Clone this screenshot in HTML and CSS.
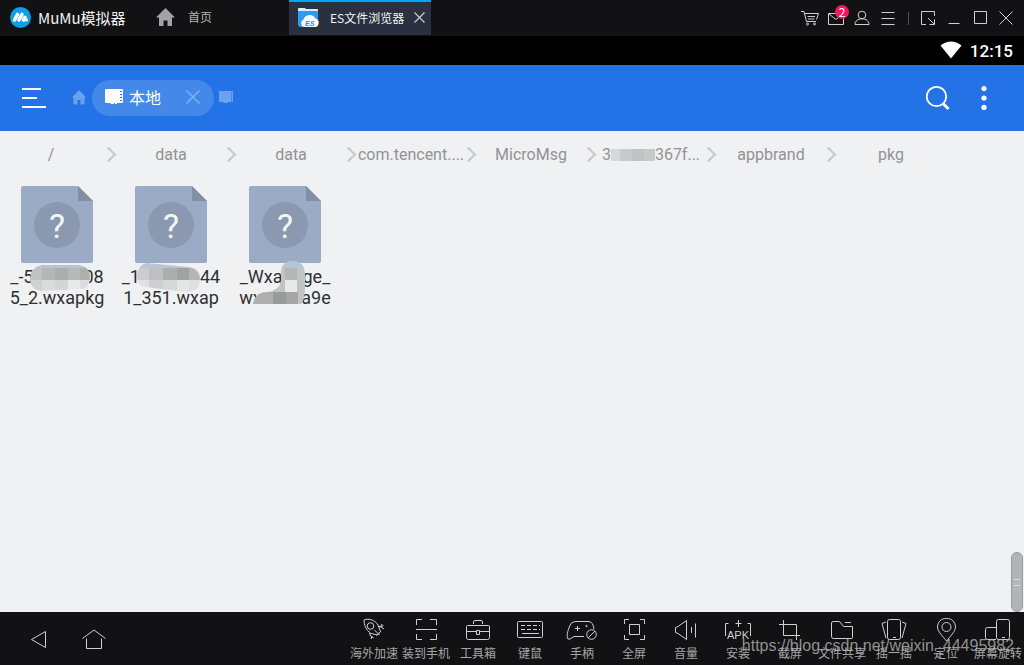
FILE: index.html
```html
<!DOCTYPE html>
<html lang="zh-CN">
<head>
<meta charset="utf-8">
<meta name="viewport" content="width=device-width, initial-scale=1">
<title>MuMu模拟器</title>
<link rel="stylesheet" href="styles.css">
</head>
<body>
<header class="titlebar">
  <div class="brand">
    <svg width="21" height="21" viewBox="0 0 21 21"><circle cx="10.500" cy="10.500" r="10.500" fill="#0a9fe8"/><path d="M4.500 13 7.500 7.500M9 13 12 7.500M13.500 13 15 10.500" stroke="#fff" stroke-width="3.600" stroke-linecap="round"/><circle cx="16.500" cy="13" r="1.500" fill="#fff"/></svg>
    <span>MuMu模拟器</span>
  </div>
  <button class="home-tab">
    <svg width="19" height="18" viewBox="0 0 19 18"><path d="M9.500 0 19 9.500H16V18H11.500V12.500H7.500V18H3V9.500H0Z" fill="#a3a3a3"/></svg>
    <span>首页</span>
  </button>
  <div class="app-tab">
    <svg width="23" height="21" viewBox="0 0 23 21"><path d="M1 2q0-1 1-1h6l1 1h11q1 0 1 1v5H1Z" fill="#d9eefb"/><path d="M1 4h19q1 0 1 1v12q0 3-3 3H4q-3 0-3-3Z" fill="#2b9df0"/><path d="M7 20a4 4 0 0 1-.500-7.500A6.500 6.500 0 0 1 18.500 11.500 4.400 4.400 0 0 1 18.500 20Z" fill="#f4faff"/><text x="8" y="18.500" class="logo-letters">ES</text></svg>
    <span class="app-name">ES文件浏览器</span>
    <button class="tab-close" aria-label="关闭标签"><svg width="11" height="11" viewBox="0 0 11 11"><path d="M.5.5l10 10M10.500.5l-10 10" stroke="#c9cbd0" stroke-width="1.200"/></svg></button>
  </div>
  <nav class="window-tools">
    <button aria-label="商店"><svg width="20" height="16" viewBox="0 0 20 16"><path d="M1 1.500H4L6.500 11.500H16M4.500 3.500H18.500L16.500 9.500M7.500 6.500H15M8 9H14.500"/><circle cx="7.500" cy="14" r="1"/><circle cx="14.500" cy="14" r="1"/></svg></button>
    <button aria-label="消息" class="mail"><svg width="16" height="14" viewBox="0 0 16 14"><path d="M.5 2.500H15.500V13.500H.5ZM1 3 8 8.500 15 3"/></svg><span class="badge">2</span></button>
    <button aria-label="用户"><svg width="16" height="16" viewBox="0 0 16 16"><circle cx="8" cy="5" r="3.800"/><path d="M1 14.500C1 11 4 8.800 8 8.800S15 11 15 14.500Z"/></svg></button>
    <button aria-label="菜单"><svg width="14" height="14" viewBox="0 0 14 14"><path d="M.5 1.500h13M.5 7.500h13M.5 13.500h13"/></svg></button>
    <span class="divider"></span>
    <button aria-label="小窗"><svg width="14" height="14" viewBox="0 0 14 14"><path d="M5 13.500H.5V.5H13.500V5M7 7l6 6M13.500 8.500v5H8.500"/></svg></button>
    <button aria-label="最小化"><svg width="12" height="14" viewBox="0 0 12 14"><path d="M.5 12.500h11"/></svg></button>
    <button aria-label="最大化"><svg width="14" height="14" viewBox="0 0 14 14"><path d="M1.500.5h12v12h-12Z"/></svg></button>
    <button aria-label="关闭"><svg width="14" height="14" viewBox="0 0 14 14"><path d="M.5.5l13 13M13.500.5l-13 13"/></svg></button>
  </nav>
</header>

<div class="statusbar">
  <svg width="22" height="18" viewBox="0 0 22 18"><path d="M11 17.500.5 4.500Q11-3.500 21.500 4.500Z" fill="#fff"/></svg>
  <time>12:15</time>
</div>

<div class="appbar">
  <button class="drawer" aria-label="菜单"><svg width="26" height="22" viewBox="0 0 26 22"><path d="M1 2h19M1 11h15M1 20h24" stroke="#fff" stroke-width="2"/></svg></button>
  <button class="mini-home" aria-label="主页"><svg width="14" height="15" viewBox="0 0 14 15"><path d="M7 0 14 7.500H12.500V14.500H8.500V10H5.500V14.500H1.500V7.500H0Z" fill="#6ba2f0"/></svg></button>
  <div class="location">
    <svg width="18" height="15" viewBox="0 0 18 15"><path d="M1 0h16q1 0 1 1v12q0 1-1 1h-5v1h-2v-1H9v1H6l-1-1H1q-1 0-1-1V1Q0 0 1 0Z" fill="#fff"/><path d="M16 2v11" stroke="#2373e7" stroke-width="2" stroke-dasharray="1 2"/></svg>
    <span>本地</span>
    <button aria-label="关闭"><svg width="14" height="14" viewBox="0 0 14 14"><path d="M.5.5l13 13M13.500.5l-13 13" stroke="#86b3f5" stroke-width="1.300"/></svg></button>
  </div>
  <button class="mini-card" aria-label="存储"><svg width="14" height="12" viewBox="0 0 14 12"><path d="M0 0h14v11H9v1H5l-1-1H0Z" fill="#6ba2f0"/><path d="M12.500 1.500v9" stroke="#2373e7" stroke-dasharray="1 1"/></svg></button>
  <button class="search" aria-label="搜索"><svg width="26" height="26" viewBox="0 0 26 26"><circle cx="11.500" cy="11.500" r="9.700" fill="none" stroke="#fff" stroke-width="1.800"/><path d="M18 18.500 23.500 24" stroke="#fff" stroke-width="3"/></svg></button>
  <button class="more" aria-label="更多"><svg width="6" height="24" viewBox="0 0 6 24"><g fill="#fff"><circle cx="3" cy="2.600" r="2.600"/><circle cx="3" cy="12" r="2.600"/><circle cx="3" cy="21.400" r="2.600"/></g></svg></button>
</div>

<main class="content">
  <ol class="crumbs">
    <li><a href="#">/</a></li>
    <li><a href="#">data</a></li>
    <li><a href="#">data</a></li>
    <li><a href="#">com.tencent....</a></li>
    <li><a href="#">MicroMsg</a></li>
    <li><a href="#">3<svg class="crumb-mask" width="44" height="14" viewBox="0 0 44 14"><path fill="#d6d7d9" d="M0 1h9v12H0Z"/><path fill="#c8c9cb" d="M9 1h12v12H9ZM33 1h11v12H33Z"/><path fill="#c1c2c4" d="M21 1h12v12H21Z"/></svg>367f...</a></li>
    <li><a href="#">appbrand</a></li>
    <li><a href="#">pkg</a></li>
  </ol>

  <ul class="files">
    <li class="file">
      <div class="file-icon"><svg width="72" height="77" viewBox="0 0 72 77"><path d="M2 0H57L72 15V75q0 2-2 2H2q-2 0-2-2V2Q0 0 2 0Z" fill="#9babc5"/><path d="M57 0 72 15H57Z" fill="#8190a5"/><circle cx="36" cy="39" r="23" fill="#8a99af"/></svg><b>?</b></div>
      <p>_-5<i class="gap gap-50"></i>08<br>5_2.wxapkg</p>
      <svg class="mask" width="114" height="130" viewBox="0 0 114 130"><clipPath id="m1"><path d="M42 85H78Q90 86 90 97 90 109 80 109L42 111Q30 110 30 98 31 87 42 85Z"/></clipPath><g clip-path="url(#m1)"><path fill="#b5c3d5" d="M28 83h64v5H28Z"/><path fill="#c0c2c3" d="M28 88h14v12H28Z"/><path fill="#b5b6b6" d="M42 88h13v12H42Z"/><path fill="#acadad" d="M55 88h13v12H55Z"/><path fill="#b7b8b8" d="M68 88h12v12H68Z"/><path fill="#aeb0ae" d="M80 88h12v12H80Z"/><path fill="#d0d1d2" d="M28 100h14v12H28Z"/><path fill="#dadbdc" d="M42 100h13v12H42Z"/><path fill="#d4d5d6" d="M55 100h13v12H55Z"/><path fill="#e8e9ea" d="M68 100h12v12H68Z"/><path fill="#dcddde" d="M80 100h12v12H80Z"/></g></svg>
    </li>
    <li class="file">
      <div class="file-icon"><svg width="72" height="77" viewBox="0 0 72 77"><path d="M2 0H57L72 15V75q0 2-2 2H2q-2 0-2-2V2Q0 0 2 0Z" fill="#9babc5"/><path d="M57 0 72 15H57Z" fill="#8190a5"/><circle cx="36" cy="39" r="23" fill="#8a99af"/></svg><b>?</b></div>
      <p>_1<i class="gap gap-60"></i>44<br>1_351.wxap</p>
      <svg class="mask" width="114" height="130" viewBox="0 0 114 130"><clipPath id="m2"><path d="M33 83 74 87Q86 88 86 100 86 112 70 112L32 107Q23 106 23 96 23 85 33 83Z"/></clipPath><g clip-path="url(#m2)"><path fill="#b8c6d8" d="M22 82h66v6H22Z"/><path fill="#cccdce" d="M22 88h13v12H22Z"/><path fill="#bfc0c1" d="M35 88h14v12H35Z"/><path fill="#acadad" d="M49 88h14v12H49Z"/><path fill="#a1a2a1" d="M63 88h12v12H63Z"/><path fill="#b4b6b5" d="M75 88h12v12H75Z"/><path fill="#dfe0e2" d="M22 100h13v13H22Z"/><path fill="#cecfd1" d="M35 100h14v13H35Z"/><path fill="#d8d9da" d="M49 100h14v13H49Z"/><path fill="#e4e5e6" d="M63 100h12v13H63Z"/><path fill="#dedfe0" d="M75 100h12v13H75Z"/></g></svg>
    </li>
    <li class="file">
      <div class="file-icon"><svg width="72" height="77" viewBox="0 0 72 77"><path d="M2 0H57L72 15V75q0 2-2 2H2q-2 0-2-2V2Q0 0 2 0Z" fill="#9babc5"/><path d="M57 0 72 15H57Z" fill="#8190a5"/><circle cx="36" cy="39" r="23" fill="#8a99af"/></svg><b>?</b></div>
      <p>_Wxa<i class="gap gap-20"></i>ge_<br>wx<i class="gap gap-30"></i>ca9e</p>
      <svg class="mask" width="114" height="130" viewBox="0 0 114 130"><clipPath id="m3"><path d="M53 92Q54 81 65 81 76 82 77 93V110Q76 122 73 124H25Q27 112 40 112 52 110 53 100Z"/></clipPath><g clip-path="url(#m3)"><path fill="#c1c3c5" d="M24 80h54v45H24Z"/><path fill="#b5c5d8" d="M50 80h30v8H50Z"/><path fill="#b5b7b6" d="M57 88h12v12H57Z"/><path fill="#e8e9ea" d="M57 100h12v12H57Z"/><path fill="#adaeae" d="M24 112h21v12H24Z"/><path fill="#999b9a" d="M45 112h13v12H45Z"/><path fill="#a4a5a4" d="M58 112h12v12H58Z"/></g></svg>
    </li>
  </ul>
  <div class="scroll-thumb"></div>
</main>

<footer class="dock">
  <div class="system">
    <button aria-label="返回"><svg width="16" height="19" viewBox="0 0 16 19"><path d="M.5 10.500 14.500 2.500V18.500Z"/></svg></button>
    <button aria-label="主屏幕"><svg width="24" height="20" viewBox="0 0 24 20"><path d="M.5 9.500 12 1 23.500 9.500M4.500 9.500V19.500H19.500V9.500"/></svg></button>
  </div>
  <nav class="tools">
    <button><svg width="28" height="26" viewBox="0 0 28 26"><path d="M4 4C9 2 15 4 18 9L20.500 15.500 17.500 19 11 17.500C6 14 4 9 4 4ZM18 10l3 1 2.500-1.500M20.500 11l1.500-3M21 11l3 2M9.500 17l1 3 3 2M12 20l-1 3M14.500 14l5 5M16.500 19.500l4-4"/><circle cx="10.500" cy="10" r="3.300"/></svg><span>海外加速</span></button>
    <button><svg width="28" height="26" viewBox="0 0 28 26"><path d="M4.500 9V3.500H10M18 3.500h6.500V9M4.500 18v5.500H10M18 23.500h6.500V18M4 13.500h21"/></svg><span>装到手机</span></button>
    <button><svg width="28" height="26" viewBox="0 0 28 26"><path d="M3.500 9.500h21q1 0 1 1v11q0 2-2 2h-19q-2 0-2-2v-11q0-1 1-1ZM9.500 8V6q0-1.500 1.500-1.500h6q1.500 0 1.500 1.500V8M2 15.500h10M16 15.500h9M12.500 14.500h3v4h-3Z"/></svg><span>工具箱</span></button>
    <button><svg width="28" height="26" viewBox="0 0 28 26"><path d="M2.500 5.500h23q1 0 1 1v14q0 1-1 1h-23q-1 0-1-1v-14q0-1 1-1ZM6 17.500h17"/><path d="M5 9.500h19M5 13.500h19" stroke-dasharray="4 2"/></svg><span>键鼠</span></button>
    <button><svg width="32" height="26" viewBox="0 0 32 26"><path d="M18 20.500H8L4 23H2C-.5 20 3 11 5 7.500Q7 5.500 10 5.500H23Q27 6 28 13M11.500 10v5M9 12.500h5"/><circle cx="20.500" cy="10" r=".7"/><circle cx="25.500" cy="18.500" r="4.800"/><path d="M22 22l7-7"/></svg><span>手柄</span></button>
    <button><svg width="28" height="26" viewBox="0 0 28 26"><path d="M4.500 8V3.500H9M20 3.500h4.500V8M4.500 19v4.500H9M20 23.500h4.500V19M9.500 8.500h10v10h-10Z"/></svg><span>全屏</span></button>
    <button><svg width="28" height="26" viewBox="0 0 28 26"><path d="M3.500 11.500 6 10.500 14.500 4.500V23.500L6 17.500 3.500 16.500ZM19.500 11v6M23.500 7.500v14"/></svg><span>音量</span></button>
    <button><svg width="28" height="26" viewBox="0 0 28 26"><path d="M4.500 7.500H1.500V20M23.500 7.500h3V20M14.500 4v7M11.500 7.500h6"/><text x="14" y="23" class="apk">APK</text></svg><span>安装</span></button>
    <button><svg width="28" height="26" viewBox="0 0 28 26"><path d="M7.500 4v15.500H24M3 8.500h17.500V24"/></svg><span>截屏</span></button>
    <button><svg width="28" height="26" viewBox="0 0 28 26"><path d="M5.500 5.500h6l4 5h9v11q0 1-1 1h-18q-2 0-2-2V7q0-1.500 2-1.500ZM17 6.500h6"/></svg><span>文件共享</span></button>
    <button><svg width="28" height="26" viewBox="0 0 28 26"><path d="M9.500 3.500h9q2 0 2 2v16q0 2-2 2h-9q-2 0-2-2v-16q0-2 2-2ZM13 21.500h3M6 6 2 7.500 6 22M22 6l4 1.500L22 22"/></svg><span>摇一摇</span></button>
    <button><svg width="28" height="26" viewBox="0 0 28 26"><path d="M14.500 25C11 20.500 5.500 15.500 5.500 11 6 5.500 9 2.500 14.500 2.500S23 5.500 23.500 11C23.500 15.500 18 20.500 14.500 25Z"/><circle cx="14.500" cy="11" r="4.500"/></svg><span>定位</span></button>
    <button><svg width="28" height="26" viewBox="0 0 28 26"><path d="M14.500 3.500h9q2 0 2 2v16q0 2-2 2h-9q-2 0-2-2v-16q0-2 2-2ZM18 21.500h3M12 11.500H3.500q-2 0-2 2v8q0 2 2 2H12"/></svg><span>屏幕旋转</span></button>
  </nav>
  <span class="watermark">https://blog.csdn.net/weixin_44495982</span>
</footer>
</body>
</html>
```
FILE: styles.css
```css
* { box-sizing: border-box; }

body {
  display: flex;
  flex-direction: column;
  min-height: 100vh;
  margin: 0;
  overflow: hidden;
  background: #f0f1f3;
  font-family: "Noto Sans CJK SC", sans-serif;
  font-size: 12px;
}

button {
  display: flex;
  align-items: center;
  justify-content: center;
  padding: 0;
  border: 0;
  background: none;
  color: inherit;
  font: inherit;
  cursor: pointer;
}

svg { display: block; flex: none; }
ul, ol, p { margin: 0; padding: 0; list-style: none; }

/* Title bar */
.titlebar {
  display: flex;
  height: 36px;
  background: #121214;
  color: #b5b5b5;
}
.brand {
  display: flex;
  align-items: center;
  gap: 7px;
  width: 156px;
  padding: 0 0 1px 10px;
  color: #f2f2f2;
  font-size: 15px;
}
.home-tab {
  gap: 13px;
  width: 133px;
  justify-content: flex-start;
  height: 33px;
}
.app-tab {
  display: flex;
  align-items: center;
  width: 142px;
  height: 35px;
  padding: 0 6px 2px 8px;
  border-top: 2px solid #00a6f2;
  background: #2a3040;
  color: #f4f4f4;
}
.app-name { flex: 1; padding-left: 10px; white-space: nowrap; }
.logo-letters { fill: #2a8fe0; font: italic bold 7px "Liberation Sans", sans-serif; }
.window-tools {
  display: flex;
  align-items: center;
  margin-left: auto;
  padding-right: 5px;
}
.window-tools button { width: 26px; height: 34px; }
.window-tools svg, .dock svg { fill: none; stroke: #d0d0d0; }
.divider { width: 1px; height: 13px; margin: 0 6px 0 7px; background: #505052; }
.mail { position: relative; }
.badge {
  position: absolute;
  top: 4px;
  left: 12px;
  width: 14px;
  height: 14px;
  border-radius: 50%;
  background: #f8155f;
  color: #fff;
  line-height: 14px;
}

/* Android status bar */
.statusbar {
  display: flex;
  align-items: center;
  justify-content: flex-end;
  gap: 8px;
  height: 29px;
  padding-right: 11px;
  background: #000;
  color: #fff;
  font: 500 17px Roboto, sans-serif;
}
.statusbar svg { margin-bottom: 2px; }

/* App bar */
.appbar {
  display: flex;
  align-items: center;
  height: 66px;
  padding: 0 37px 0 21px;
  background: #2373e7;
}
.mini-home { margin: 0 6px 2px 25px; }
.location {
  display: flex;
  align-items: center;
  width: 122px;
  height: 36px;
  margin-bottom: 1px;
  padding: 0 14px 2px 13px;
  border-radius: 18px;
  background: #4489ea;
  color: #fff;
  font-size: 16px;
}
.location span { flex: 1; padding-left: 6px; }
.mini-card { margin: 0 0 2px 5px; }
.search { margin: 0 30px 0 auto; }

/* File browser */
.content { position: relative; flex: 1; }
.crumbs { display: flex; height: 49px; align-items: center; padding-bottom: 2px; }
.crumbs li { display: flex; flex: none; align-items: center; width: 120px; }
.crumbs li:not(:last-child)::after {
  width: 9px;
  height: 9px;
  border: solid #c8c9cb;
  border-width: 2px 2px 0 0;
  margin-left: 1px;
  transform: rotate(45deg);
  content: "";
}
.crumbs a {
  display: flex;
  align-items: center;
  justify-content: center;
  width: 102px;
  color: #929394;
  font: 16px Roboto, sans-serif;
  text-decoration: none;
  white-space: nowrap;
}
.files { display: flex; }
.file {
  position: relative;
  display: flex;
  flex-direction: column;
  align-items: center;
  width: 114px;
  height: 130px;
  padding-top: 6px;
  color: #2f3031;
  font: 18px Roboto, sans-serif;
}
.file p {
  margin-top: 3px;
  line-height: 21px;
  text-align: center;
  white-space: nowrap;
}
.file-icon { display: grid; }
.file-icon svg, .file-icon b { grid-area: 1 / 1; }
.file-icon b {
  padding-top: 2px;
  place-self: center;
  color: #f4f5f7;
  font: 34px Roboto, sans-serif;
}
.gap { display: inline-block; }
.gap-20 { width: 20px; }
.gap-30 { width: 30px; }
.gap-50 { width: 50px; }
.gap-60 { width: 60px; }
.mask { position: absolute; inset: 0; }
.scroll-thumb {
  position: absolute;
  right: 1px;
  bottom: 0;
  display: flex;
  align-items: center;
  justify-content: center;
  width: 12px;
  height: 60px;
  border: 1px solid #999b9d;
  border-radius: 6px;
  background: #b3b4b6;
}
.scroll-thumb::after {
  width: 6px;
  height: 5px;
  border: solid #dcdddf;
  border-width: 1px 0;
  content: "";
}

/* Emulator toolbar */
.dock {
  position: relative;
  display: flex;
  justify-content: space-between;
  height: 53px;
  background: #121214;
  color: #a6a6a6;
}
.system { display: flex; align-items: center; gap: 35px; padding-left: 31px; }
.tools { display: flex; }
.tools button {
  flex-direction: column;
  justify-content: flex-start;
  gap: 2px;
  width: 52px;
  padding-top: 4px;
  line-height: 18px;
  white-space: nowrap;
}
.apk {
  fill: #d0d0d0;
  stroke: none;
  font: 11px "Liberation Sans", sans-serif;
  text-anchor: middle;
}
.watermark {
  position: absolute;
  right: 10px;
  bottom: 10px;
  color: rgba(190, 190, 190, 0.75);
  font: 16px "Liberation Sans", sans-serif;
  pointer-events: none;
}
```
